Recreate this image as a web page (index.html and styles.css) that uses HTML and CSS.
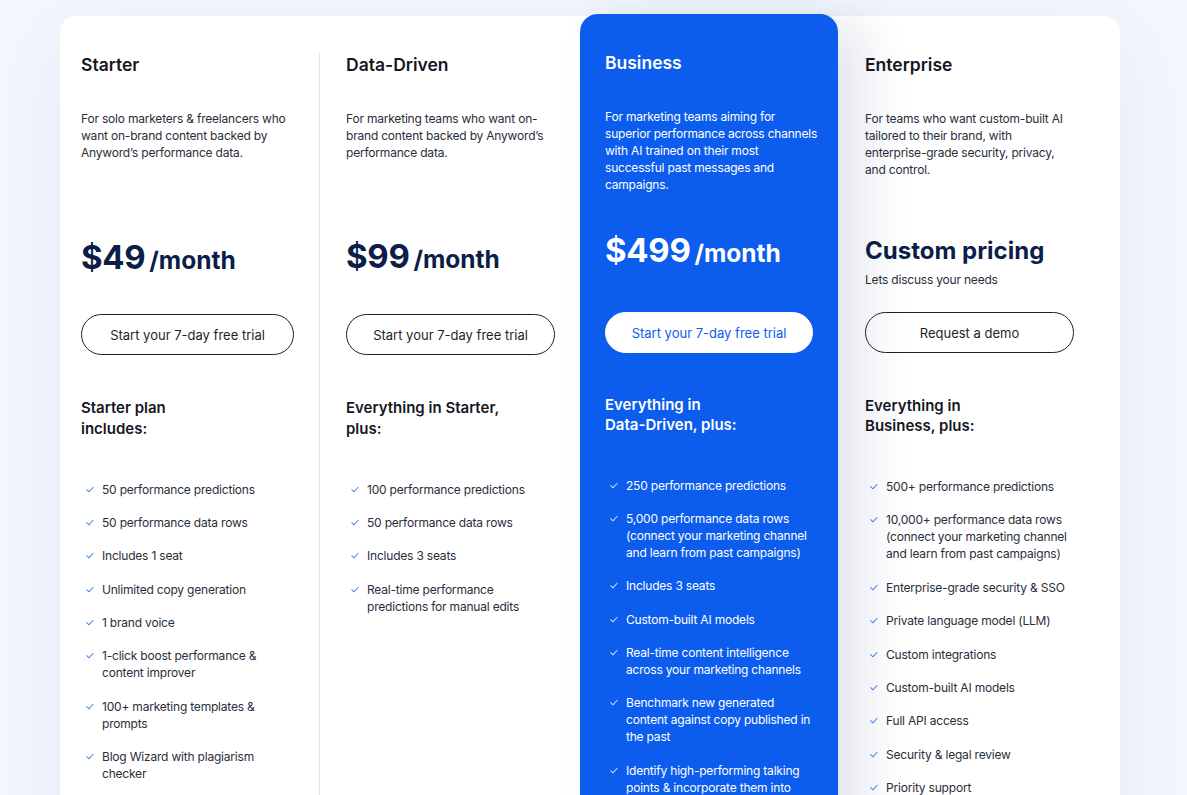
FILE: index.html
```html
<!DOCTYPE html>
<html lang="en">
<head>
<meta charset="utf-8">
<title>Pricing</title>
<link rel="stylesheet" href="styles.css">
</head>
<body>
<svg width="0" height="0" style="position:absolute">
  <defs>
    <symbol id="chk" viewBox="0 0 10 8"><polyline points="1,4.3 3.6,6.9 9,1.2" fill="none" stroke="currentColor" stroke-width="1.3" stroke-linecap="round" stroke-linejoin="round"/></symbol>
  </defs>
</svg>
<main class="card">
  <section class="plan plan-starter">
    <h2 class="title">Starter</h2>
    <p class="desc">For solo marketers &amp; freelancers who<br>want on-brand content backed by<br>Anyword’s performance data.</p>
    <div class="price-block pb-starter">
      <div class="price"><span class="amount">$49</span> <span class="per">/month</span></div>
    </div>
    <a class="btn">Start your 7-day free trial</a>
    <h3 class="incl">Starter plan<br>includes:</h3>
    <ul class="features">
      <li><svg class="ck"><use href="#chk"/></svg><span>50 performance predictions</span></li>
      <li><svg class="ck"><use href="#chk"/></svg><span>50 performance data rows</span></li>
      <li><svg class="ck"><use href="#chk"/></svg><span>Includes 1 seat</span></li>
      <li><svg class="ck"><use href="#chk"/></svg><span>Unlimited copy generation</span></li>
      <li><svg class="ck"><use href="#chk"/></svg><span>1 brand voice</span></li>
      <li><svg class="ck"><use href="#chk"/></svg><span>1-click boost performance &amp;<br>content improver</span></li>
      <li><svg class="ck"><use href="#chk"/></svg><span>100+ marketing templates &amp;<br>prompts</span></li>
      <li><svg class="ck"><use href="#chk"/></svg><span>Blog Wizard with plagiarism<br>checker</span></li>
    </ul>
  </section>

  <section class="plan plan-dd">
    <h2 class="title">Data-Driven</h2>
    <p class="desc">For marketing teams who want on-<br>brand content backed by Anyword’s<br>performance data.</p>
    <div class="price-block pb-dd">
      <div class="price"><span class="amount">$99</span> <span class="per">/month</span></div>
    </div>
    <a class="btn">Start your 7-day free trial</a>
    <h3 class="incl">Everything in Starter,<br>plus:</h3>
    <ul class="features">
      <li><svg class="ck"><use href="#chk"/></svg><span>100 performance predictions</span></li>
      <li><svg class="ck"><use href="#chk"/></svg><span>50 performance data rows</span></li>
      <li><svg class="ck"><use href="#chk"/></svg><span>Includes 3 seats</span></li>
      <li><svg class="ck"><use href="#chk"/></svg><span>Real-time performance<br>predictions for manual edits</span></li>
    </ul>
  </section>

  <section class="plan plan-business">
    <h2 class="title">Business</h2>
    <p class="desc">For marketing teams aiming for<br>superior performance across channels<br>with AI trained on their most<br>successful past messages and<br>campaigns.</p>
    <div class="price-block pb-business">
      <div class="price"><span class="amount">$499</span> <span class="per">/month</span></div>
    </div>
    <a class="btn btn-white">Start your 7-day free trial</a>
    <h3 class="incl">Everything in<br>Data-Driven, plus:</h3>
    <ul class="features">
      <li><svg class="ck"><use href="#chk"/></svg><span>250 performance predictions</span></li>
      <li><svg class="ck"><use href="#chk"/></svg><span>5,000 performance data rows<br>(connect your marketing channel<br>and learn from past campaigns)</span></li>
      <li><svg class="ck"><use href="#chk"/></svg><span>Includes 3 seats</span></li>
      <li><svg class="ck"><use href="#chk"/></svg><span>Custom-built AI models</span></li>
      <li><svg class="ck"><use href="#chk"/></svg><span>Real-time content intelligence<br>across your marketing channels</span></li>
      <li><svg class="ck"><use href="#chk"/></svg><span>Benchmark new generated<br>content against copy published in<br>the past</span></li>
      <li><svg class="ck"><use href="#chk"/></svg><span>Identify high-performing talking<br>points &amp; incorporate them into<br>new content</span></li>
    </ul>
  </section>

  <section class="plan plan-ent">
    <h2 class="title">Enterprise</h2>
    <p class="desc">For teams who want custom-built AI<br>tailored to their brand, with<br>enterprise-grade security, privacy,<br>and control.</p>
    <div class="price-block pb-ent">
      <div class="custom">Custom pricing</div>
      <div class="sub">Lets discuss your needs</div>
    </div>
    <a class="btn">Request a demo</a>
    <h3 class="incl">Everything in<br>Business, plus:</h3>
    <ul class="features">
      <li><svg class="ck"><use href="#chk"/></svg><span>500+ performance predictions</span></li>
      <li><svg class="ck"><use href="#chk"/></svg><span>10,000+ performance data rows<br>(connect your marketing channel<br>and learn from past campaigns)</span></li>
      <li><svg class="ck"><use href="#chk"/></svg><span>Enterprise-grade security &amp; SSO</span></li>
      <li><svg class="ck"><use href="#chk"/></svg><span>Private language model (LLM)</span></li>
      <li><svg class="ck"><use href="#chk"/></svg><span>Custom integrations</span></li>
      <li><svg class="ck"><use href="#chk"/></svg><span>Custom-built AI models</span></li>
      <li><svg class="ck"><use href="#chk"/></svg><span>Full API access</span></li>
      <li><svg class="ck"><use href="#chk"/></svg><span>Security &amp; legal review</span></li>
      <li><svg class="ck"><use href="#chk"/></svg><span>Priority support</span></li>
    </ul>
  </section>
</main>
</body>
</html>
```

FILE: styles.css
```css
* { box-sizing: border-box; }
html, body { margin: 0; padding: 0; }
body {
  background: #f4f7fd;
  font-family: Inter, "Liberation Sans", sans-serif;
  color: #22283a;
  overflow: hidden;
  height: 795px;
}
.card {
  margin: 16px 0 0 60px;
  width: 1060px;
  min-height: 900px;
  background: #ffffff;
  border-radius: 16px;
  display: grid;
  grid-template-columns: 260px 260px 258px 282px;
  align-items: start;
  box-shadow: 0 20px 90px rgba(40, 60, 150, 0.08);
}
.plan {
  padding: 38px 25px 40px 25px;
  min-height: 900px;
}
.plan-starter {
  margin-top: 36px;
  padding-top: 2px;
  padding-left: 21px;
  border-right: 1px solid #e5e6ea;
}
.plan-dd { padding-left: 26px; }
.plan-business {
  margin-top: -2px;
  background: #0c5ced;
  border-radius: 18px 18px 0 0;
  color: #ffffff;
  position: relative;
  z-index: 1;
  box-shadow: 26px 10px 50px rgba(30, 40, 110, 0.12);
}
.plan-ent { padding-left: 27px; padding-right: 46px; }

.title {
  margin: 0;
  font-size: 17.5px;
  line-height: 22px;
  font-weight: 600;
  color: #16171f;
}
.plan-business .title { color: #fff; }
.desc {
  margin: 34px 0 0 0;
  height: 85px;
  font-size: 12px;
  line-height: 17px;
  letter-spacing: -0.2px;
  white-space: nowrap;
  color: #2a2e3b;
}
.plan-business .desc { color: #fff; }

.price-block { height: 119px; }
.pb-starter { padding-top: 40px; }
.pb-dd { padding-top: 39px; }
.pb-business { padding-top: 35px; }
.pb-ent { padding-top: 41px; height: 117px; }
.price {
  line-height: 44px;
  color: #0b1d48;
  font-weight: 700;
  white-space: nowrap;
}
.plan-business .price { color: #fff; }
.amount { font-size: 33px; letter-spacing: -0.3px; }
.per { font-size: 24.5px; }
.custom {
  font-size: 24px;
  line-height: 30px;
  font-weight: 700;
  color: #0b1d48;
  white-space: nowrap;
}
.sub {
  margin-top: 5px;
  font-size: 12px;
  line-height: 17px;
  letter-spacing: -0.2px;
  color: #2a2e3b;
}

.btn {
  display: flex;
  align-items: center;
  justify-content: center;
  height: 41px;
  border: 1px solid #1e1f26;
  border-radius: 21px;
  font-size: 13px;
  color: #1e1f26;
  white-space: nowrap;
}
.btn-white {
  background: #ffffff;
  border-color: #ffffff;
  color: #0c5ced;
}

.incl {
  margin: 41.5px 0 0 0;
  font-size: 15px;
  line-height: 21px;
  font-weight: 600;
  color: #16171f;
  white-space: nowrap;
}
.plan-business .incl { color: #fff; line-height: 20px; }
.plan-ent .incl { line-height: 20px; margin-top: 43px; }

.features {
  list-style: none;
  margin: 42px 0 0 0;
  padding: 0 0 0 5px;
  display: flex;
  flex-direction: column;
  gap: 16.4px;
}
.features li {
  display: flex;
  align-items: flex-start;
  gap: 8px;
  font-size: 12px;
  line-height: 17px;
  letter-spacing: -0.2px;
  color: #2a2e3b;
  white-space: nowrap;
}
.plan-business .features li { color: #fff; }
.plan-ent .features { padding-left: 5px; }
.ck {
  flex: none;
  width: 8px;
  height: 17px;
  color: #4f86ee;
}
.plan-business .ck { color: #cddcfb; }
```
